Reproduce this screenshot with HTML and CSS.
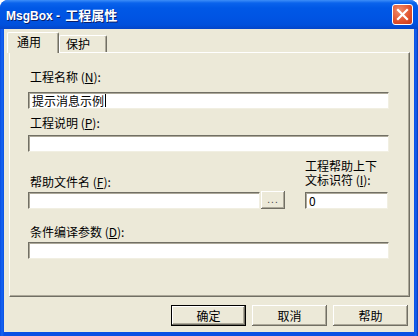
FILE: index.html
```html
<!DOCTYPE html>
<html lang="zh-CN">
<head>
    <meta charset="UTF-8">
    <title>MsgBox - 工程属性</title>
    <link rel="stylesheet" href="styles.css">
</head>
<body>
    <div class="window">
        <div class="titlebar">
            <span class="title">MsgBox - <span class="title-cjk">工程属性</span></span>
            <span class="close-btn">
                <svg width="13" height="13" viewBox="0 0 13 13">
                    <path d="M2 2 L11 11 M11 2 L2 11" stroke="#fff" stroke-width="2.2" stroke-linecap="square"/>
                </svg>
            </span>
        </div>

        <div class="client">
            <div class="tabs">
                <div class="tab active">通用</div>
                <div class="tab">保护</div>
            </div>

            <div class="panel">
                <label class="field-label first">工程名称 (<u>N</u>):</label>
                <div class="input name-input"><span class="value">提示消息示例</span><span class="caret"></span></div>

                <label class="field-label second">工程说明 (<u>P</u>):</label>
                <div class="input desc-input"></div>

                <div class="help-row">
                    <div class="help-file">
                        <label class="field-label">帮助文件名 (<u>F</u>):</label>
                        <div class="file-line">
                            <div class="input file-input"></div>
                            <button class="btn browse-btn">...</button>
                        </div>
                    </div>
                    <div class="help-context">
                        <label class="context-label">工程帮助上下<br>文标识符 (<u>I</u>):</label>
                        <div class="input context-input"><span class="value">0</span></div>
                    </div>
                </div>

                <label class="field-label fourth">条件编译参数 (<u>D</u>):</label>
                <div class="input args-input"></div>
            </div>

            <div class="buttons">
                <button class="btn default">确定</button>
                <button class="btn">取消</button>
                <button class="btn">帮助</button>
            </div>
        </div>
    </div>
</body>
</html>
```

FILE: styles.css
```css
body {
    margin: 0;
    padding: 0;
    font-family: "Liberation Sans", "Noto Sans CJK SC", sans-serif;
    font-size: 12px;
    color: #000;
    background: #ffffff;
}

.window {
    width: 418px;
    height: 336px;
    box-sizing: border-box;
    display: flex;
    flex-direction: column;
    background: linear-gradient(90deg, #0a4de0, #1665f2 2px, #0a50e4 4px, #0a50e4 414px, #1562ee 416px, #0638b8);
    border-radius: 8px 8px 0 0;
    overflow: hidden;
}

.titlebar {
    height: 29px;
    flex: none;
    display: flex;
    align-items: center;
    justify-content: space-between;
    padding: 0 5px 0 6px;
    background: linear-gradient(180deg, #3d8ef8 0, #0a63ec 3px, #0058e6 8px, #0054e3 18px, #0050dc 25px, #0445c8 29px);
    color: #fff;
}

.title {
    font-family: "Liberation Sans", "Noto Sans CJK SC", sans-serif;
    font-weight: bold;
    font-size: 12px;
    text-shadow: 1px 1px #0a1e6a;
}

.title-cjk {
    font-family: "Noto Sans CJK SC", sans-serif;
    font-size: 13px;
    margin-left: 2px;
}

.close-btn {
    width: 19px;
    height: 19px;
    display: flex;
    align-items: center;
    justify-content: center;
    border: 1px solid #fff;
    border-radius: 3px;
    background: radial-gradient(circle at 35% 30%, #f08d6c, #e0512c 60%, #c8391a);
}

.client {
    flex: 1;
    margin: 0 4px 4px 4px;
    background: #ece9d8;
    display: flex;
    flex-direction: column;
}

.tabs {
    display: flex;
    align-items: flex-end;
    padding: 3px 0 0 3px;
    height: 20px;
    position: relative;
    z-index: 1;
    font-family: "Noto Sans CJK SC", sans-serif;
}

.tab {
    width: 40px;
    height: 16px;
    line-height: 16px;
    box-sizing: content-box;
    padding-left: 6px;
    border: 1px solid #fff;
    border-right-color: #716f64;
    border-bottom: none;
    border-radius: 2px 2px 0 0;
    background: #ece9d8;
    box-shadow: inset -1px 0 #aca899;
}

.tab.active {
    width: 41px;
    height: 20px;
    line-height: 18px;
    padding-left: 9px;
    margin-bottom: -1px;
}

.panel {
    height: 245px;
    margin: 0 4px 0 5px;
    box-sizing: border-box;
    padding: 17px 20px 0 18px;
    border: 1px solid #fff;
    border-right-color: #716f64;
    border-bottom-color: #716f64;
    box-shadow: inset -1px -1px #aca899;
    font-family: "Noto Sans CJK SC", sans-serif;
}

.field-label,
.context-label {
    display: block;
    line-height: 14px;
    padding-left: 2px;
}

.context-label {
    padding-left: 0;
    line-height: 14px;
    margin-bottom: 5px;
}

.input {
    height: 17px;
    box-sizing: border-box;
    background: #fff;
    border: 1px solid;
    border-color: #716f64 #f1efe2 #f1efe2 #716f64;
    box-shadow: inset 1px 1px #aca899;
    display: flex;
    align-items: center;
    padding-left: 3px;
    line-height: 14px;
}

.caret {
    width: 1px;
    height: 13px;
    background: #000;
    margin-left: 1px;
}

.name-input {
    margin-top: 8px;
}

.field-label.second {
    margin-top: 7px;
}

.desc-input {
    margin-top: 5px;
}

.help-row {
    display: flex;
    align-items: flex-end;
    justify-content: space-between;
    margin-top: 7px;
}

.help-file {
    width: 257px;
}

.help-file .field-label {
    margin-bottom: 2px;
}

.file-line {
    display: flex;
    align-items: center;
}

.file-input {
    flex: 1;
    height: 17px;
}

.btn {
    width: 75px;
    height: 21px;
    padding: 0;
    border: none;
    background: #ece9d8;
    font-family: "Noto Sans CJK SC", sans-serif;
    font-size: 12px;
    color: #000;
    box-shadow: inset -1px -1px #716f64, inset 1px 1px #fff, inset -2px -2px #aca899;
}

.btn.default {
    box-shadow: inset 0 0 0 1px #000, inset -2px -2px #716f64, inset 2px 2px #fff, inset -3px -3px #aca899;
}

.btn.browse-btn {
    width: 24px;
    height: 18px;
    margin-left: 1px;
    font-family: "Liberation Sans", sans-serif;
    font-size: 10px;
    line-height: 14px;
    letter-spacing: 1px;
    color: #444;
}

.help-context {
    width: 83px;
    margin-right: 1px;
}

.field-label.fourth {
    margin-top: 16px;
}

.args-input {
    margin-top: 3px;
}

.buttons {
    display: flex;
    justify-content: flex-end;
    gap: 6px;
    padding: 8px 6px 0 0;
}
```
